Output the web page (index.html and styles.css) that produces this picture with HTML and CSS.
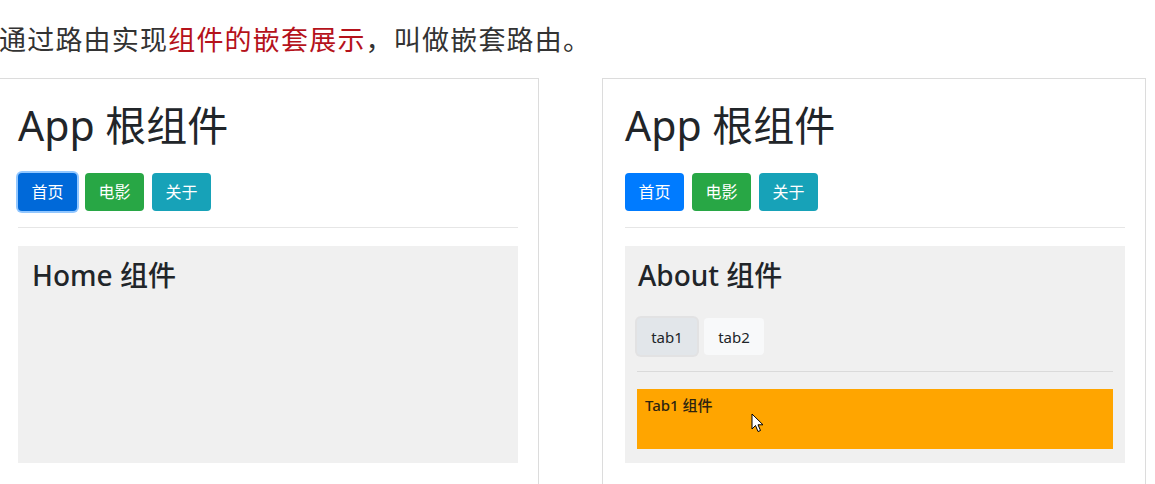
FILE: index.html
```html
<!DOCTYPE html>
<html lang="zh-CN">
<head>
<meta charset="utf-8">
<title>嵌套路由</title>
<link rel="stylesheet" href="styles.css">
</head>
<body>
<p class="intro">通过路由实现<span class="hl">组件的嵌套展示</span>，叫做嵌套路由。</p>
<div class="panels">
  <div class="panel">
    <h1 class="title">App 根组件</h1>
    <div class="nav">
      <button class="btn btn-primary is-focus">首页</button>
      <button class="btn btn-success">电影</button>
      <button class="btn btn-info">关于</button>
    </div>
    <hr class="rule">
    <div class="view">
      <h3 class="view-title">Home 组件</h3>
    </div>
  </div>
  <div class="panel">
    <h1 class="title">App 根组件</h1>
    <div class="nav">
      <button class="btn btn-primary">首页</button>
      <button class="btn btn-success">电影</button>
      <button class="btn btn-info">关于</button>
    </div>
    <hr class="rule">
    <div class="view">
      <h3 class="view-title strong">About 组件</h3>
      <div class="tabs">
        <button class="btn btn-light is-active">tab1</button>
        <button class="btn btn-light">tab2</button>
      </div>
      <hr class="rule rule-inner">
      <div class="tab-pane">
        <span class="tab-text">Tab1 组件</span>
        <svg class="cursor" width="13" height="20" viewBox="0 0 13 20"><path d="M1 1 L1 16 L4.5 12.5 L7 18.5 L9.5 17.5 L7 11.8 L12 11.8 Z" fill="#fff" stroke="#000" stroke-width="1" stroke-linejoin="round"/></svg>
      </div>
    </div>
  </div>
</div>
</body>
</html>
```

FILE: styles.css
```css
html, body {
  margin: 0;
  padding: 0;
  overflow: hidden;
  background: #fff;
}

body {
  font-family: "Noto Sans", "Noto Sans CJK SC", sans-serif;
  color: #212529;
}

.intro {
  margin: 0;
  padding: 21px 0 21px;
  font-size: 27px;
  line-height: 36px;
  letter-spacing: 1.2px;
  color: #333;
  text-indent: -1px;
  font-family: "Noto Sans CJK SC", sans-serif;
}

.hl {
  color: #b5121b;
}

.panels {
  display: flex;
  gap: 63px;
  margin-left: -5px;
}

.panel {
  width: 500px;
  flex: none;
  border: 1px solid #dcdcdc;
  padding: 22px 20px 60px 22px;
}

.title {
  margin: 0 0 24px;
  font-size: 41px;
  line-height: 48px;
  font-weight: 400;
}

.nav, .tabs {
  display: flex;
  gap: 8px;
}

.tabs {
  gap: 7px;
}

.btn {
  height: 38px;
  padding: 0 12.5px;
  border: 1px solid transparent;
  border-radius: 4px;
  font-family: "Noto Sans", "Noto Sans CJK SC", sans-serif;
  font-size: 16px;
  line-height: 24px;
  color: #fff;
  cursor: pointer;
}

.btn-primary { background: #007bff; }
.btn-primary.is-focus {
  background: #0069d9;
  box-shadow: 0 0 0 2px rgba(38, 143, 255, 0.5);
}
.btn-success { background: #28a745; }
.btn-info { background: #17a2b8; }

.btn-light {
  background: #f8f9fa;
  color: #212529;
  height: 37px;
  width: 60px;
  padding: 0;
  font-size: 15px;
}
.btn-light.is-active {
  background: #e2e6ea;
  box-shadow: 0 0 0 2px rgba(216, 217, 219, 0.6);
}

.rule {
  margin: 16px 0 18px;
  border: 0;
  border-top: 1px solid #e6e6e6;
  height: 0;
}

.rule-inner {
  margin: 16px 0 17px;
  border-top-color: #dadada;
}

.view {
  box-sizing: border-box;
  height: 217px;
  background: #f0f0f0;
  padding: 12px;
}

.view-title {
  margin: 0 0 26px;
  padding-left: 2px;
  font-size: 28px;
  line-height: 34px;
  font-weight: 500;
}

.view-title.strong {
  padding-left: 1px;
}

.tab-pane {
  position: relative;
  height: 60px;
  box-sizing: border-box;
  background: #ffa500;
  padding: 4px 8px;
}

.tab-text {
  font-size: 15px;
  line-height: 24px;
  font-weight: 500;
  color: #2e2410;
}

.cursor {
  position: absolute;
  left: 114px;
  top: 24px;
}
```
